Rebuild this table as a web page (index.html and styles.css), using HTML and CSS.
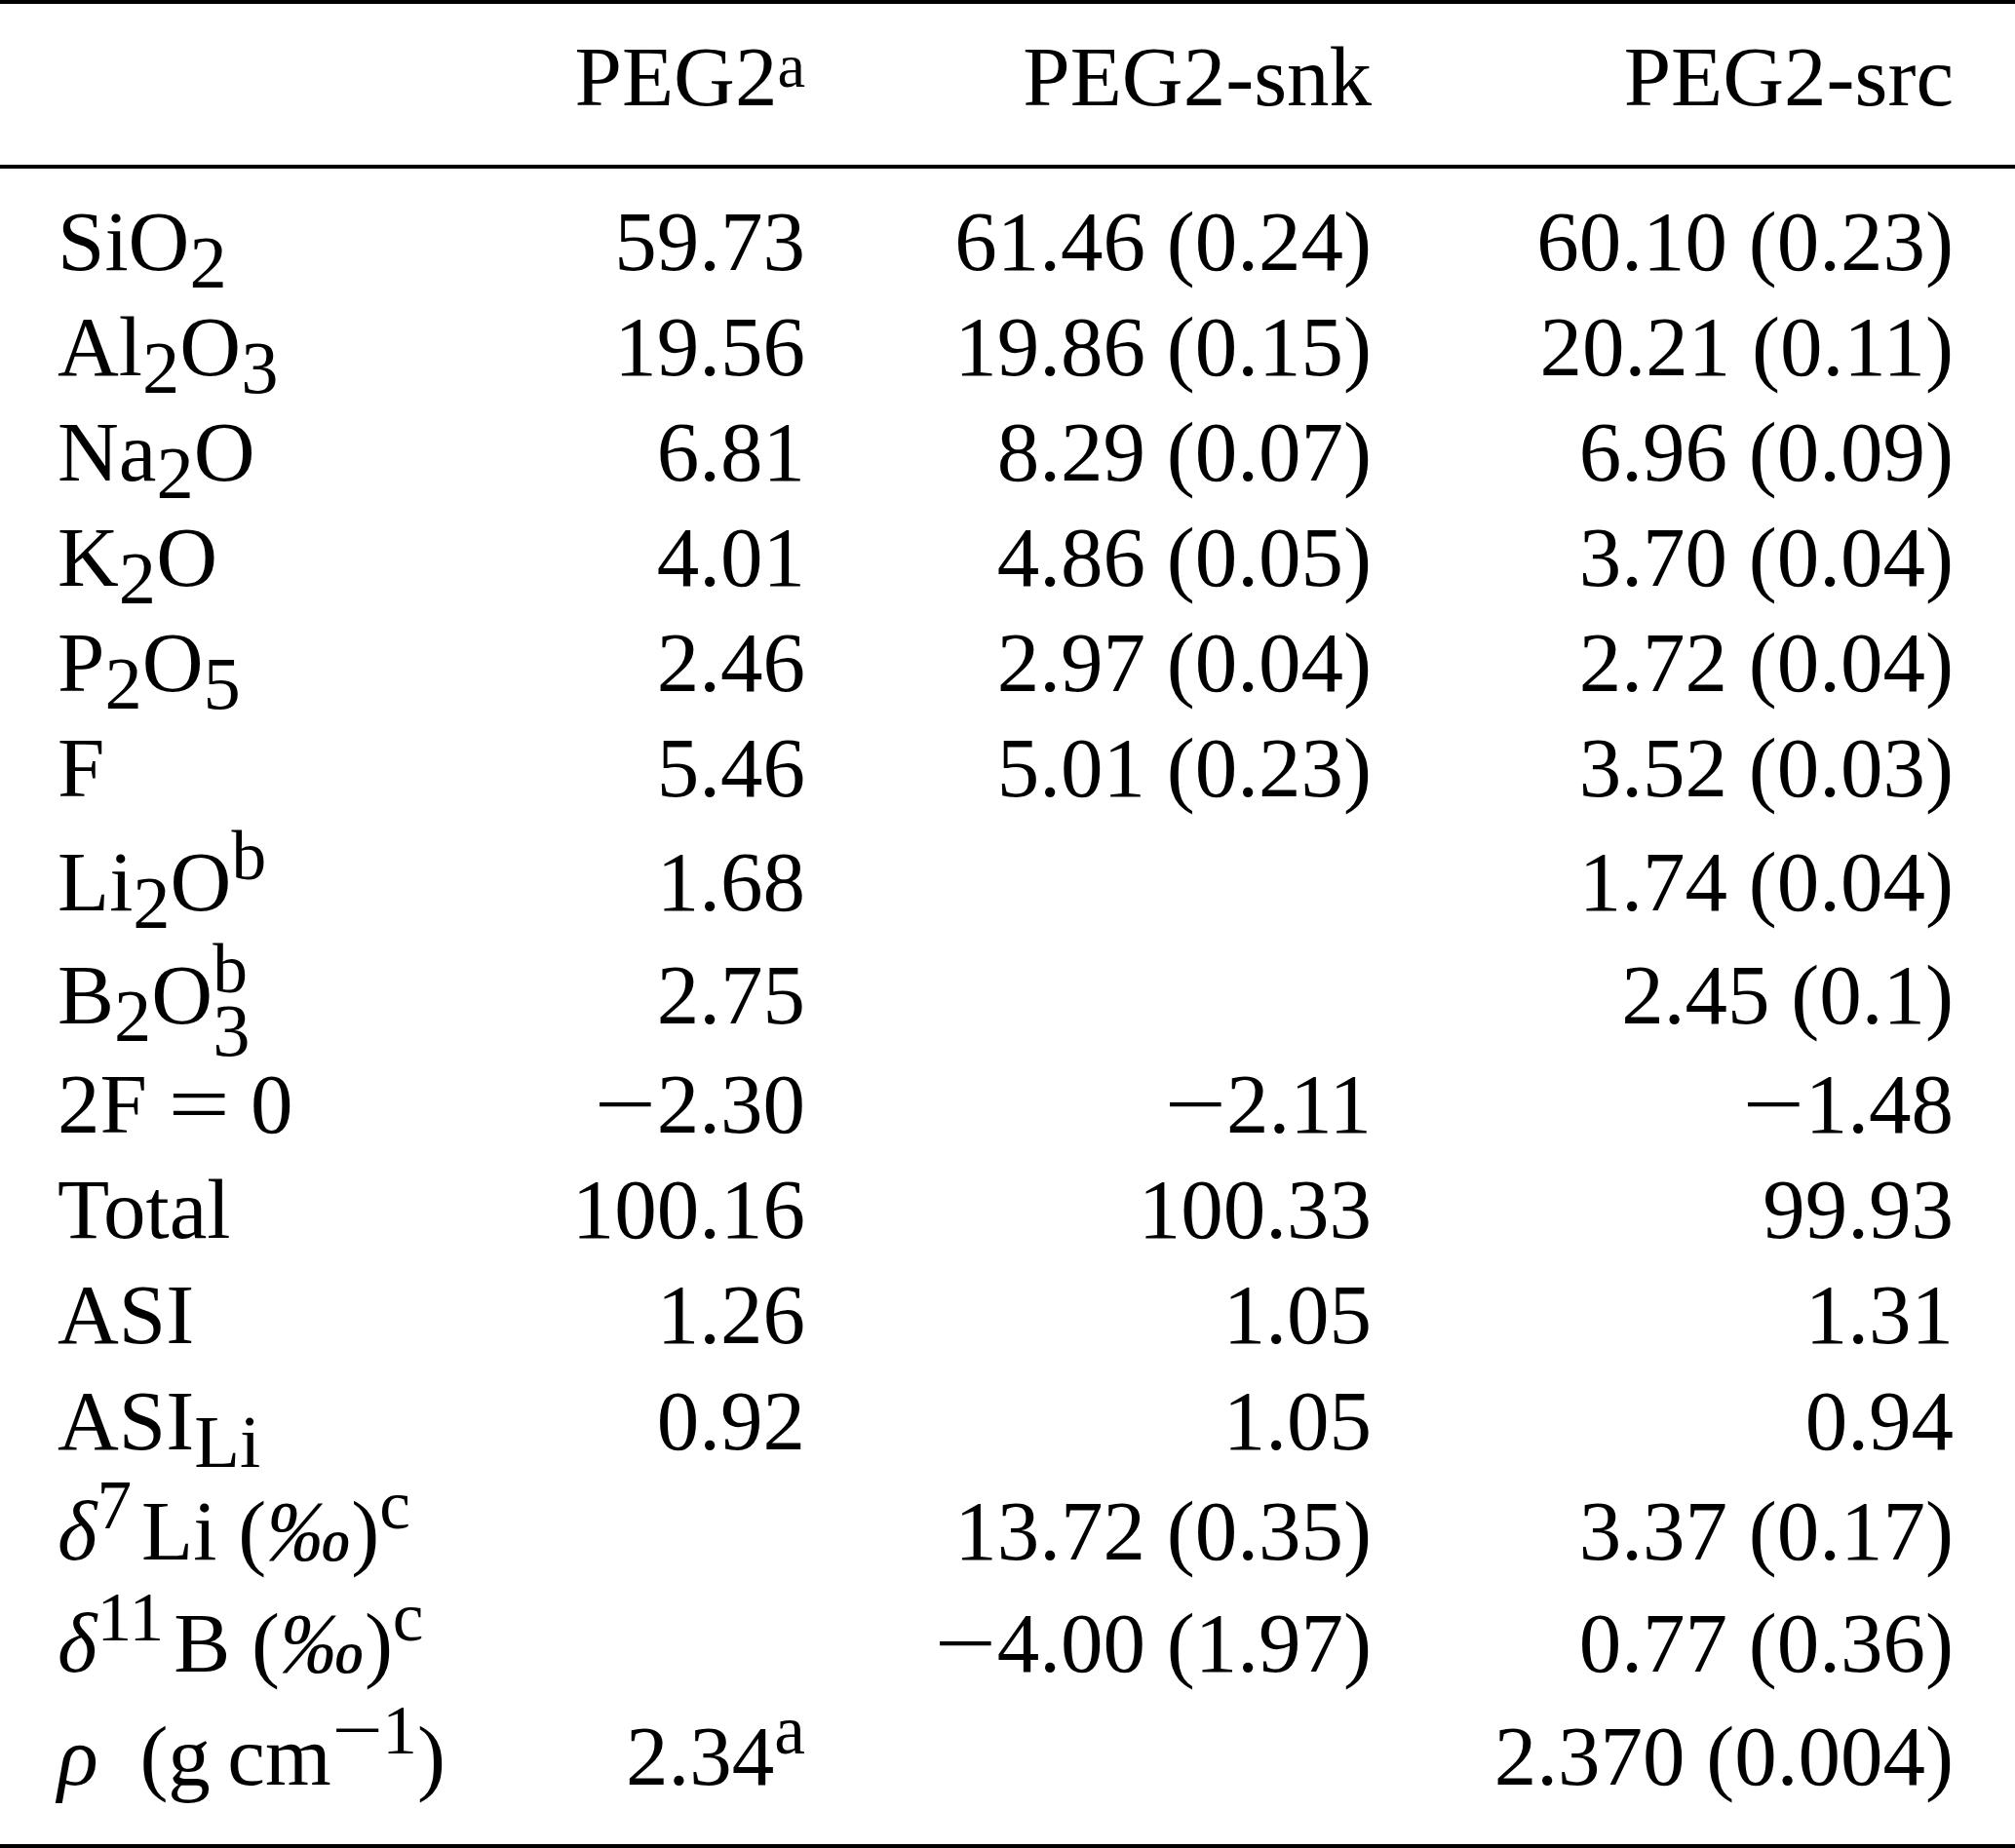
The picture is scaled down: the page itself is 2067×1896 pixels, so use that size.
FILE: index.html
```html
<!DOCTYPE html>
<html lang="en">
<head>
<meta charset="utf-8">
<title>PEG2 composition table</title>
<link rel="stylesheet" href="styles.css">
</head>
<body>
<div class="table">
  <div class="row head">
    <div class="cell label"></div>
    <div class="cell">PEG2<sup class="tsup">a</sup></div>
    <div class="cell">PEG2-snk</div>
    <div class="cell">PEG2-src</div>
  </div>
  <div class="body">
    <div class="row">
      <div class="cell label">SiO<sub class="sb">2</sub></div>
      <div class="cell">59.73</div>
      <div class="cell">61.46 (0.24)</div>
      <div class="cell">60.10 (0.23)</div>
    </div>
    <div class="row">
      <div class="cell label">Al<sub class="sb">2</sub>O<sub class="sb">3</sub></div>
      <div class="cell">19.56</div>
      <div class="cell">19.86 (0.15)</div>
      <div class="cell">20.21 (0.11)</div>
    </div>
    <div class="row">
      <div class="cell label">Na<sub class="sb">2</sub>O</div>
      <div class="cell">6.81</div>
      <div class="cell">8.29 (0.07)</div>
      <div class="cell">6.96 (0.09)</div>
    </div>
    <div class="row">
      <div class="cell label">K<sub class="sb">2</sub>O</div>
      <div class="cell">4.01</div>
      <div class="cell">4.86 (0.05)</div>
      <div class="cell">3.70 (0.04)</div>
    </div>
    <div class="row">
      <div class="cell label">P<sub class="sb">2</sub>O<sub class="sb">5</sub></div>
      <div class="cell">2.46</div>
      <div class="cell">2.97 (0.04)</div>
      <div class="cell">2.72 (0.04)</div>
    </div>
    <div class="row">
      <div class="cell label">F</div>
      <div class="cell">5.46</div>
      <div class="cell">5.01 (0.23)</div>
      <div class="cell">3.52 (0.03)</div>
    </div>
    <div class="row gap-9">
      <div class="cell label">Li<sub class="sb">2</sub>O<sup class="sp">b</sup></div>
      <div class="cell">1.68</div>
      <div class="cell"></div>
      <div class="cell">1.74 (0.04)</div>
    </div>
    <div class="row gap-8">
      <div class="cell label">B<sub class="sb">2</sub>O<sub class="sb sb-low">3</sub><sup class="sp sp-over">b</sup></div>
      <div class="cell">2.75</div>
      <div class="cell"></div>
      <div class="cell">2.45 (0.1)</div>
    </div>
    <div class="row gap-4">
      <div class="cell label">2F<span class="eq">=</span>0</div>
      <div class="cell"><span class="minus">−</span>2.30</div>
      <div class="cell"><span class="minus">−</span>2.11</div>
      <div class="cell"><span class="minus">−</span>1.48</div>
    </div>
    <div class="row">
      <div class="cell label">Total</div>
      <div class="cell">100.16</div>
      <div class="cell">100.33</div>
      <div class="cell">99.93</div>
    </div>
    <div class="row">
      <div class="cell label">ASI</div>
      <div class="cell">1.26</div>
      <div class="cell">1.05</div>
      <div class="cell">1.31</div>
    </div>
    <div class="row gap-1">
      <div class="cell label">ASI<sub class="sb">Li</sub></div>
      <div class="cell">0.92</div>
      <div class="cell">1.05</div>
      <div class="cell">0.94</div>
    </div>
    <div class="row gap-5">
      <div class="cell label"><span class="it">δ</span><sup class="sp iso">7</sup>Li (<span class="it">‰</span>)<sup class="sp">c</sup></div>
      <div class="cell"></div>
      <div class="cell">13.72 (0.35)</div>
      <div class="cell">3.37 (0.17)</div>
    </div>
    <div class="row gap-7">
      <div class="cell label"><span class="it">δ</span><sup class="sp iso">11</sup>B (<span class="it">‰</span>)<sup class="sp">c</sup></div>
      <div class="cell"></div>
      <div class="cell"><span class="minus">−</span>4.00 (1.97)</div>
      <div class="cell">0.77 (0.36)</div>
    </div>
    <div class="row gap-8">
      <div class="cell label"><span class="it rho">ρ</span> (g&#8201;cm<sup class="sp"><span class="minus">−</span>1</sup>)</div>
      <div class="cell">2.34<sup class="sp">a</sup></div>
      <div class="cell"></div>
      <div class="cell">2.370 (0.004)</div>
    </div>
  </div>
</div>
</body>
</html>
```
FILE: styles.css
```css
html, body {
  margin: 0;
  padding: 0;
  background: #ffffff;
}

body {
  color: #000000;
  font-family: "Liberation Serif", "Times New Roman", serif;
  font-size: 87px;
}

.table {
  width: 2067px;
  box-sizing: border-box;
  border-top: 4px solid #000000;
  border-bottom: 4px solid #000000;
}

.row {
  display: grid;
  grid-template-columns: 381px 386px 581px 597px;
  padding: 0 63px 0 59px;
  line-height: 108px;
  white-space: nowrap;
}

.head {
  padding-top: 21px;
  padding-bottom: 36px;
  border-bottom: 4px solid #000000;
}

.body {
  padding-top: 21px;
  padding-bottom: 36px;
}

.gap-1 { padding-top: 1px; }
.gap-4 { padding-top: 4px; }
.gap-5 { padding-top: 5px; }
.gap-7 { padding-top: 7px; }
.gap-8 { padding-top: 8px; }
.gap-9 { padding-top: 9px; }

.cell {
  text-align: right;
}

.cell.label {
  text-align: left;
}

.sb {
  font-size: 0.88em;
  vertical-align: -0.235em;
  line-height: 0;
}

.sb-low {
  vertical-align: -0.43em;
}

.sp {
  font-size: 0.82em;
  vertical-align: 0.45em;
  line-height: 0;
}

.sp-over {
  margin-left: -0.537em;
}

.iso {
  margin-right: 0.14em;
}

.tsup {
  font-size: 0.74em;
  vertical-align: 0.29em;
  line-height: 0;
}

.it {
  font-style: italic;
}

.rho {
  margin-right: 0.24em;
}

.minus {
  display: inline-block;
  width: 0.74em;
  text-align: center;
  transform: scaleX(1.3);
}

.eq {
  display: inline-block;
  width: 1.22em;
  text-align: center;
  transform: scaleX(1.3);
}
```
